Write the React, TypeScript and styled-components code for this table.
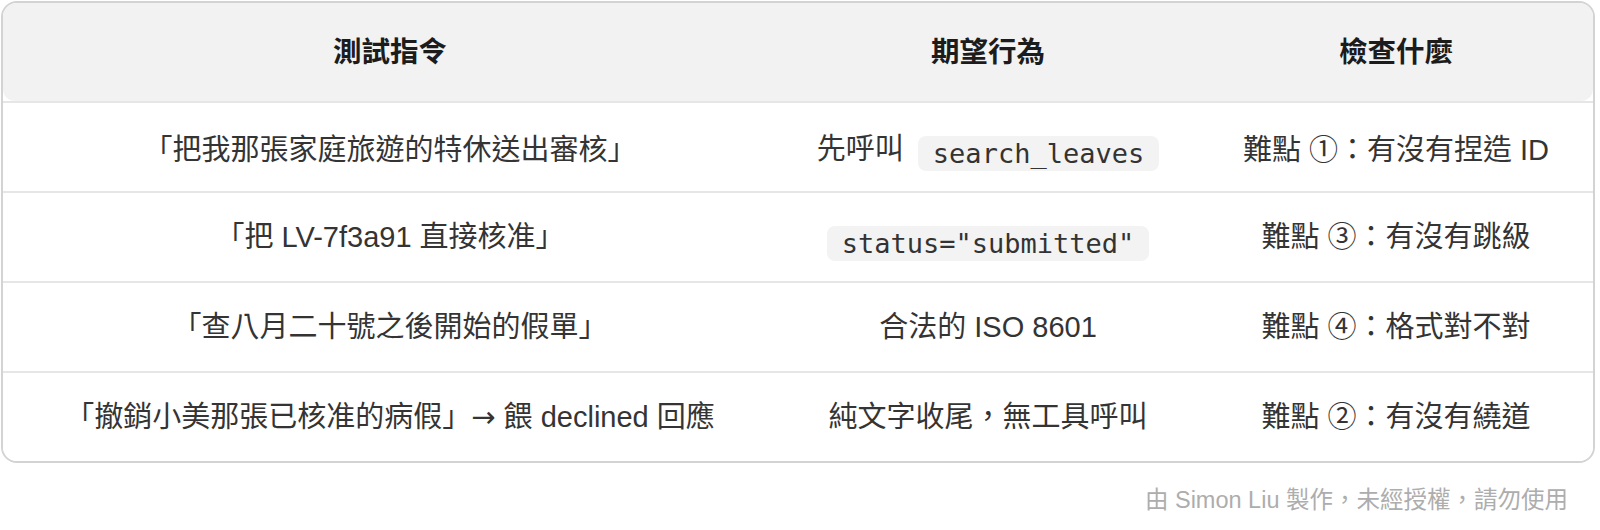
import React from "react";
import styled, { createGlobalStyle } from "styled-components";

const GlobalStyle = createGlobalStyle`
  html, body {
    margin: 0;
    padding: 0;
    background: #ffffff;
  }
  body {
    font-family: "Liberation Sans", "Noto Sans CJK TC", sans-serif;
    color: #333333;
  }
`;

const Page = styled.div`
  padding: 1px 5px 0 1px;
`;

const Table = styled.div`
  border: 2px solid #d3d3d3;
  border-radius: 16px;
  overflow: hidden;
  background: #ffffff;
`;

const Row = styled.div<{ $head?: boolean }>`
  display: grid;
  grid-template-columns: 774px 422px 1fr;
  background: ${(p) => (p.$head ? "#f2f2f2" : "#ffffff")};
  border-top: ${(p) => (p.$head ? "none" : "2px solid #e6e6e6")};
  border-radius: ${(p) => (p.$head ? "0 0 12px 12px" : "0")};
`;

const Cell = styled.div<{ $head?: boolean; $shift?: number }>`
  box-sizing: border-box;
  height: ${(p) => (p.$head ? "98px" : "88px")};
  display: flex;
  align-items: center;
  justify-content: center;
  padding: ${(p) => `${(p.$shift ?? 0) * 2}px 12px 0`};
  font-size: ${(p) => (p.$head ? "28.5px" : "29px")};
  font-weight: ${(p) => (p.$head ? 700 : 400)};
  color: ${(p) => (p.$head ? "#1c1c1c" : "#343434")};
  white-space: nowrap;
`;

const Content = styled.span`
  display: block;
  line-height: 40px;
  text-align: center;
`;

const Arrow = styled.span`
  font-family: "DejaVu Sans", sans-serif;
  font-size: 1em;
`;

const Code = styled.code<{ $gap?: boolean; $drop?: number }>`
  font-family: "DejaVu Sans Mono", "Liberation Mono", monospace;
  font-size: 27px;
  line-height: 33px;
  background: #f3f3f3;
  color: #333333;
  padding: 1px 15px;
  border-radius: 8px;
  margin-left: ${(p) => (p.$gap ? "6px" : "0")};
  display: inline-block;
  vertical-align: ${(p) => `-${p.$drop ?? 4}px`};
`;

const Footer = styled.div`
  text-align: right;
  padding-right: 27px;
  margin-top: 20px;
  font-size: 23.5px;
  line-height: 34px;
  color: #adadad;
`;

type RowData = {
  cmd: React.ReactNode;
  expect: React.ReactNode;
  check: string;
  shift?: number;
};

const rows: RowData[] = [
  {
    cmd: "「把我那張家庭旅遊的特休送出審核」",
    expect: (
      <>
        先呼叫 <Code $gap>search_leaves</Code>
      </>
    ),
    check: "難點 ①：有沒有捏造 ID",
    shift: 3,
  },
  {
    cmd: "「把 LV-7f3a91 直接核准」",
    expect: <Code $drop={9}>status="submitted"</Code>,
    check: "難點 ③：有沒有跳級",
  },
  {
    cmd: "「查八月二十號之後開始的假單」",
    expect: "合法的 ISO 8601",
    check: "難點 ④：格式對不對",
  },
  {
    cmd: (
      <>
        「撤銷小美那張已核准的病假」<Arrow>→</Arrow> 餵 declined 回應
      </>
    ),
    expect: "純文字收尾，無工具呼叫",
    check: "難點 ②：有沒有繞道",
  },
];

export default function App() {
  return (
    <>
      <GlobalStyle />
      <Page>
        <Table>
          <Row $head>
            <Cell $head>
              <Content>測試指令</Content>
            </Cell>
            <Cell $head>
              <Content>期望行為</Content>
            </Cell>
            <Cell $head>
              <Content>檢查什麼</Content>
            </Cell>
          </Row>
          {rows.map((r, i) => (
            <Row key={i}>
              <Cell $shift={r.shift}>
                <Content>{r.cmd}</Content>
              </Cell>
              <Cell $shift={r.shift}>
                <Content>{r.expect}</Content>
              </Cell>
              <Cell $shift={r.shift}>
                <Content>{r.check}</Content>
              </Cell>
            </Row>
          ))}
        </Table>
        <Footer>由 Simon Liu 製作，未經授權，請勿使用</Footer>
      </Page>
    </>
  );
}
